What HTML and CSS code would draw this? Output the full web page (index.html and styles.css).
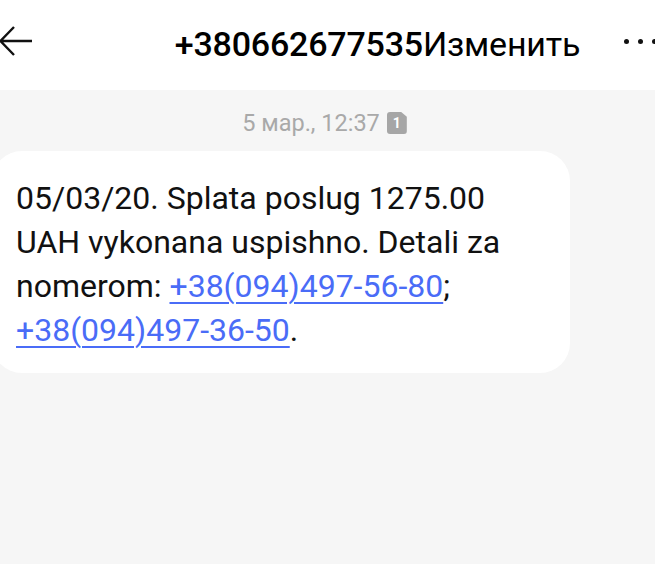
FILE: index.html
```html
<!DOCTYPE html>
<html lang="ru">
<head>
<meta charset="utf-8">
<link rel="stylesheet" href="styles.css">
</head>
<body>
<header class="topbar">
  <svg class="back" width="36" height="34" viewBox="0 0 36 34"><path d="M32 17H0.5M14 3L0.5 17L14 31" fill="none" stroke="#111" stroke-width="2.4"/></svg>
  <div class="title"><span class="num">+380662677535</span><span class="edit">Изменить</span></div>
  <div class="more"><i></i><i></i><i></i></div>
</header>
<main class="chat">
  <div class="stamp"><span>5 мар., 12:37</span><span class="sim">1</span></div>
  <div class="bubble">05/03/20. Splata poslug 1275.00 UAH vykonana uspishno. Detali za nomerom: <a href="#">+38(094)497-56-80</a>; <a href="#">+38(094)497-36-50</a>.</div>
</main>
</body>
</html>
```
FILE: styles.css
```css
html, body { margin: 0; padding: 0; }
body { width: 655px; height: 564px; overflow: hidden; background: #f6f6f6; font-family: Roboto, "Noto Sans", sans-serif; }
.topbar { height: 90px; background: #fff; display: flex; align-items: center; position: relative; }
.back { position: absolute; left: 0; top: 24px; }
.title { flex: 1; text-align: center; font-size: 34px; color: #000; padding-left: 100px; padding-bottom: 3px; box-sizing: border-box; white-space: nowrap; letter-spacing: -0.2px; }
.num { font-weight: 500; }
.more { display: flex; gap: 9px; position: absolute; left: 624px; top: 39px; }
.more i { width: 5px; height: 5px; border-radius: 50%; background: #111; display: block; }
.chat { padding-top: 18px; }
.stamp { display: flex; justify-content: center; align-items: center; gap: 7px; color: #a9a9a9; font-size: 23.5px; padding-right: 6px; height: 30px; }
.sim { background: #a6a6a6; color: #fff; font-size: 14px; font-weight: 700; width: 20px; height: 22px; border-radius: 3px; display: flex; align-items: center; justify-content: center; clip-path: polygon(0 0, 72% 0, 100% 22%, 100% 100%, 0 100%); }
.bubble { margin-top: 13px; margin-left: -8px; background: #fff; width: 578px; box-sizing: border-box; border-radius: 30px; padding: 25px 20px 21px 24px; font-size: 32px; line-height: 44px; color: #111; }
.bubble a { color: #4a6cf7; text-decoration: underline; text-underline-offset: 5px; text-decoration-thickness: 2px; }
```
